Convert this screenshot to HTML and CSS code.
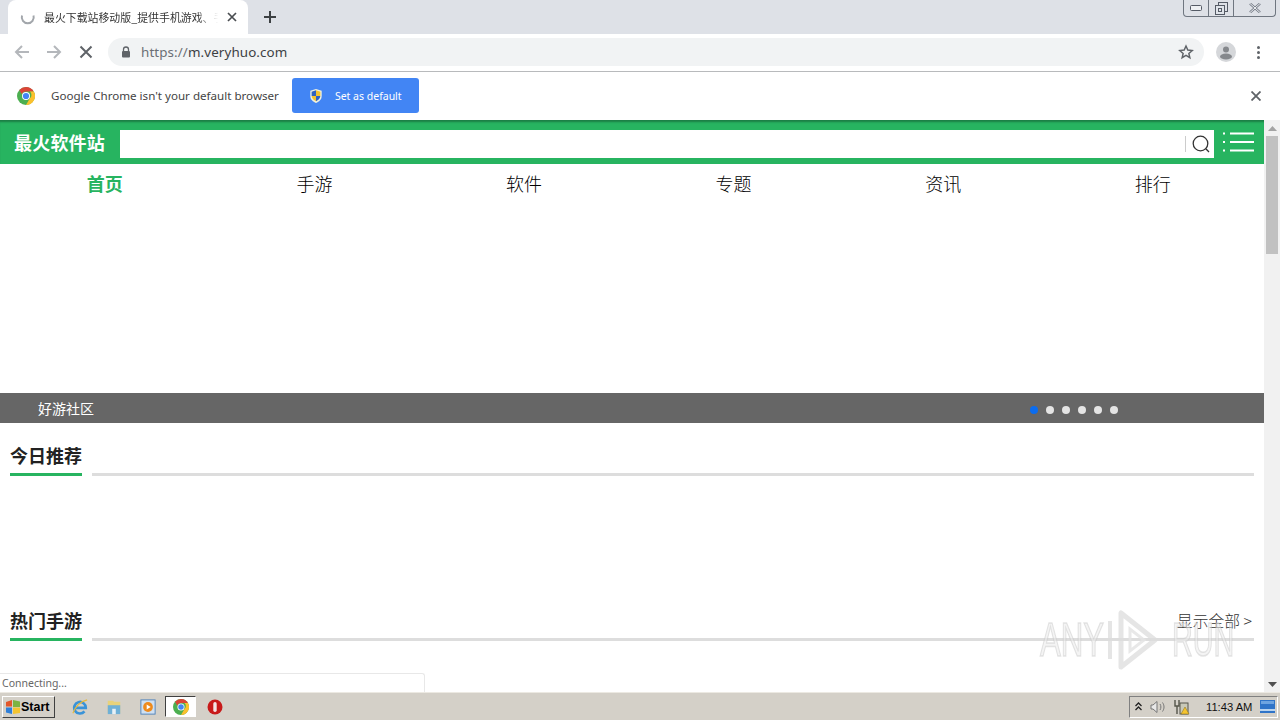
FILE: index.html
```html
<!DOCTYPE html>
<html lang="zh">
<head>
<meta charset="utf-8">
<title>最火软件站</title>
<link rel="stylesheet" href="styles.css">
</head>
<body>
<div class="tabstrip">
  <div class="tab">
    <svg class="spinner" width="16" height="16" viewBox="0 0 16 16"><path d="M2 6.500a6 6 0 1 0 11.500 0" fill="none" stroke="#a2a6ab" stroke-width="2"/></svg>
    <span class="tab-title">最火下载站移动版_提供手机游戏、手</span>
    <svg class="tab-x" width="10" height="10" viewBox="0 0 10 10"><path d="M1 1l8 8M9 1l-8 8" stroke="#4a4d51" stroke-width="1.7"/></svg>
  </div>
  <svg class="newtab" width="12" height="12" viewBox="0 0 12 12"><path d="M6 0v12M0 6h12" stroke="#3c4043" stroke-width="2"/></svg>
  <div class="winbtns">
    <div class="winbtn min"><svg width="12" height="6" viewBox="0 0 12 6"><rect x=".5" y=".5" width="11" height="5" rx="1" fill="#eef0f3" stroke="#555b66"/></svg></div>
    <div class="winbtn max"><svg width="13" height="13" viewBox="0 0 13 13"><rect x="3.500" y=".5" width="9" height="9" fill="none" stroke="#555b66"/><rect x=".5" y="3.500" width="9" height="9" fill="#e0e4ea" stroke="#555b66"/><rect x="3.500" y="6.500" width="3" height="3" fill="none" stroke="#555b66"/></svg></div>
    <div class="winbtn close"><svg width="12" height="10" viewBox="0 0 12 10"><path d="M1 .5l10 9M11 .5l-10 9" stroke="#777d88" stroke-width="2.400"/><path d="M1 .5l10 9M11 .5l-10 9" stroke="#eef0f3" stroke-width="1"/></svg></div>
  </div>
</div>

<div class="toolbar">
  <svg class="nav-icon" width="16" height="16" viewBox="0 0 16 16"><path d="M15 8H2M8 2L2 8l6 6" fill="none" stroke="#b4b7bb" stroke-width="2"/></svg>
  <svg class="nav-icon" width="16" height="16" viewBox="0 0 16 16"><path d="M1 8h13M8 2l6 6-6 6" fill="none" stroke="#b4b7bb" stroke-width="2"/></svg>
  <svg class="nav-icon" width="16" height="16" viewBox="0 0 16 16"><path d="M2.500 2.500l11 11M13.500 2.500l-11 11" stroke="#5f6368" stroke-width="2"/></svg>
  <div class="omnibox">
    <svg class="lock" width="10" height="12" viewBox="0 0 10 12"><path d="M2.500 5V3.500a2.500 2.500 0 0 1 5 0V5" fill="none" stroke="#5f6368" stroke-width="1.300"/><rect x="1" y="5" width="8" height="6.500" rx="1" fill="#5f6368"/></svg>
    <span class="url"><span class="url-dim">https://</span>m.veryhuo.com</span>
    <svg class="star" width="16" height="16" viewBox="0 0 24 24"><path d="M12 3l2.700 6.100 6.600.6-5 4.400 1.500 6.500L12 17.200l-5.800 3.400 1.500-6.500-5-4.400 6.600-.6z" fill="none" stroke="#5f6368" stroke-width="2.200"/></svg>
  </div>
  <div class="avatar">
    <svg width="20" height="20" viewBox="0 0 20 20"><circle cx="10" cy="10" r="10" fill="#d5d7da"/><circle cx="10" cy="7.500" r="3" fill="#85888c"/><ellipse cx="10" cy="14.500" rx="6" ry="3" fill="#85888c"/></svg>
  </div>
  <div class="kebab"><i></i><i></i><i></i></div>
</div>

<div class="infobar">
  <svg class="chrome-logo" width="18" height="18" viewBox="0 0 18 18">
    <circle cx="9" cy="9" r="9" fill="#4caf50"/>
    <path d="M9 0a9 9 0 0 1 7.800 4.500H9A4.500 4.500 0 0 0 4.800 7.300L2.300 3A9 9 0 0 1 9 0z" fill="#db4437"/>
    <path d="M16.800 4.500A9 9 0 0 1 9 18l3.900-6.700a4.500 4.500 0 0 0 0-6.800z" fill="#fbc02d"/>
    <circle cx="9" cy="9" r="4" fill="#fff"/><circle cx="9" cy="9" r="3.100" fill="#4285f4"/>
  </svg>
  <span class="info-text">Google Chrome isn't your default browser</span>
  <div class="default-btn">
    <svg width="14" height="16" viewBox="0 0 16 17"><path d="M8 .5l6.500 2v6c0 4-3 6.500-6.500 8-3.500-1.500-6.500-4-6.500-8v-6z" fill="#eef0e0"/><path d="M8 2l5 1.500V8.500H8z" fill="#f2c230"/><path d="M8 8.500h5c-.3 3-2.500 4.800-5 6z" fill="#2f62c0"/><path d="M8 2v6.500H3V3.500z" fill="#2f62c0"/><path d="M3 8.500h5v6c-2.500-1.200-4.700-3-5-6z" fill="#f2c230"/></svg>
    <span>Set as default</span>
  </div>
  <svg class="info-close" width="10" height="10" viewBox="0 0 10 10"><path d="M.5.500l9 9M9.500.500l-9 9" stroke="#5f6368" stroke-width="1.800"/></svg>
</div>

<div class="viewport">
  <main class="page">
    <header class="site-head">
      <div class="brand">最火软件站</div>
      <div class="search">
        <span class="search-sep"></span>
        <svg width="20" height="20" viewBox="0 0 20 20"><circle cx="9.500" cy="9.500" r="7.300" fill="none" stroke="#333" stroke-width="1.300"/><path d="M14.800 14.800l3.200 3.200" stroke="#333" stroke-width="1.300"/></svg>
      </div>
      <svg class="menu" width="32" height="20" viewBox="0 0 32 20"><path d="M0 1.500h2M0 10h2M0 18.500h2M7 1.500h24M7 10h24M7 18.500h24" stroke="#fff" stroke-width="2"/></svg>
    </header>
    <nav class="main-nav">
      <a class="active">首页</a><a>手游</a><a>软件</a><a>专题</a><a>资讯</a><a>排行</a>
    </nav>
    <div class="banner">
      <div class="caption">
        <span class="caption-text">好游社区</span>
        <div class="dots"><i class="on"></i><i></i><i></i><i></i><i></i><i></i></div>
      </div>
    </div>
    <section class="sec sec-today">
      <div class="sec-head"><h2>今日推荐</h2><span class="rule"></span></div>
    </section>
    <section class="sec sec-hot">
      <div class="sec-head"><h2>热门手游</h2><span class="rule"></span><a class="more">显示全部 &gt;</a></div>
    </section>
  </main>
  <aside class="scrollbar">
    <div class="sb-arrow"><svg width="9" height="5" viewBox="0 0 9 5"><path d="M4.500 0L9 5H0z" fill="#a3a3a3"/></svg></div>
    <div class="sb-track"><div class="sb-thumb"></div></div>
    <div class="sb-arrow"><svg width="9" height="5" viewBox="0 0 9 5"><path d="M0 0h9L4.500 5z" fill="#505050"/></svg></div>
  </aside>
  <div class="status">Connecting...</div>
  <div class="watermark">
    <span class="wm-any">ANY</span>
    <svg class="wm-icon" width="50" height="60" viewBox="0 0 50 60"><path d="M2 11v38" fill="none" stroke="#dcdcdc" stroke-width="4" opacity=".75"/><path d="M13 3v54l34-27z" fill="none" stroke="#dcdcdc" stroke-width="5" stroke-linejoin="round" opacity=".75"/><path d="M22 19v22l14-11z" fill="none" stroke="#e4e4e4" stroke-width="3" opacity=".85"/></svg>
    <span class="wm-run">RUN</span>
  </div>
</div>

<footer class="taskbar">
  <div class="start">
    <svg width="16" height="16" viewBox="0 0 16 16"><path d="M1 3l6-2v6.500H1z" fill="#e2572b"/><path d="M8 1l7 1.500v5.500H8z" fill="#7cb342"/><path d="M1 8.500h6V15l-6-1.500z" fill="#2f7fd8"/><path d="M8 8.500h7V14l-7 1z" fill="#f4c430"/></svg>
    <span>Start</span>
  </div>
  <div class="quick">
    <svg class="ql" width="16" height="16" viewBox="0 0 18 18"><path d="M3.500 10H15.500A6.500 6.500 0 1 0 14 14" fill="none" stroke="#3a93d8" stroke-width="3"/><path d="M1 16C4 8 9 3 17 1" fill="none" stroke="#e8b93a" stroke-width="1.300"/></svg>
    <svg class="ql" width="16" height="16" viewBox="0 0 18 18"><path d="M2 2h6l1 1h7v13H2z" fill="#e8d27a"/><rect x="2" y="7" width="14" height="10" fill="#6fb0d6"/><rect x="7" y="11" width="4" height="6" fill="#e8f0f5"/></svg>
    <svg class="ql" width="16" height="16" viewBox="0 0 18 18"><rect x="1" y="1" width="16" height="16" fill="#cfe0f2" stroke="#4a7fb8"/><circle cx="9" cy="9" r="5.500" fill="#ee8a1c"/><path d="M7.500 6.200L12 9l-4.500 2.800z" fill="#fff"/></svg>
    <div class="ql-active">
      <svg width="16" height="16" viewBox="0 0 18 18"><circle cx="9" cy="9" r="9" fill="#4caf50"/><path d="M9 0a9 9 0 0 1 7.800 4.500H9A4.500 4.500 0 0 0 4.800 7.300L2.300 3A9 9 0 0 1 9 0z" fill="#db4437"/><path d="M16.800 4.500A9 9 0 0 1 9 18l3.900-6.700a4.500 4.500 0 0 0 0-6.800z" fill="#fbc02d"/><circle cx="9" cy="9" r="4" fill="#fff"/><circle cx="9" cy="9" r="3.100" fill="#4285f4"/></svg>
    </div>
    <svg class="ql" width="16" height="16" viewBox="0 0 16 16"><circle cx="8" cy="8" r="7.500" fill="#c81a1a"/><rect x="6.300" y="3" width="3.400" height="10" rx="1.700" fill="#f4e4e4"/></svg>
  </div>
  <div class="tray">
    <svg width="7" height="9" viewBox="0 0 7 9"><path d="M.5 4l3-3 3 3M.5 8l3-3 3 3" fill="none" stroke="#222" stroke-width="1.300"/></svg>
    <svg width="16" height="14" viewBox="0 0 16 14"><path d="M1 5h2l4-3.500v11L3 9H1z" fill="#e8e8e8" stroke="#777"/><path d="M10 4c1.200 2 1.200 4 0 6M12.500 2.500c2 3 2 6 0 9" fill="none" stroke="#777"/></svg>
    <svg width="16" height="16" viewBox="0 0 16 16"><rect x="6" y="4" width="8" height="11" fill="#c9c9b8" stroke="#55554a"/><path d="M1 1v6h4V1M3 7v8" fill="none" stroke="#55554a" stroke-width="1.400"/><path d="M11 8l4 7H7z" fill="#f4c430" stroke="#8a6d10" stroke-width=".5"/></svg>
    <span class="clock">11:43 AM</span>
    <svg width="15" height="13" viewBox="0 0 15 13"><rect width="15" height="13" fill="#2f74c8"/><rect y="9" width="15" height="2" fill="#b9d4ef"/><rect x="1" y="1" width="13" height="3" fill="#6ea4e0"/></svg>
  </div>
</footer>
</body>
</html>
```
FILE: styles.css
```css
* { box-sizing: border-box; }
html, body { margin: 0; height: 720px; overflow: hidden; }
body {
  width: 1280px;
  display: flex;
  flex-direction: column;
  font-family: "Noto Sans", "Noto Sans CJK SC", sans-serif;
  background: #fff;
}

/* tab strip */
.tabstrip {
  height: 34px;
  flex: none;
  display: flex;
  align-items: flex-start;
  background: #dee1e7;
}
.tab {
  width: 240px;
  height: 34px;
  margin-left: 8px;
  padding: 0 0 0 12px;
  display: flex;
  align-items: center;
  background: #fff;
  border-radius: 8px 8px 0 0;
}
.spinner { flex: none; }
.tab-title {
  flex: none;
  width: 178px;
  margin-left: 8px;
  font-size: 10.900px;
  line-height: 16px;
  color: #333;
  white-space: nowrap;
  font-family: "Noto Sans CJK SC", sans-serif;
  -webkit-mask-image: linear-gradient(to right, #000 86%, transparent 98%);
  mask-image: linear-gradient(to right, #000 86%, transparent 98%);
}
.tab-x { margin-left: 5px; flex: none; }
.newtab { margin: 11px 0 0 16px; flex: none; }
.winbtns {
  margin-left: auto;
  margin-right: 4px;
  height: 17px;
  display: flex;
  border: 1px solid #6f7680;
  border-top: 0;
  border-radius: 0 0 4px 4px;
}
.winbtn {
  display: flex;
  align-items: center;
  justify-content: center;
  border-right: 1px solid #6f7680;
}
.min { width: 25px; }
.max { width: 25px; }
.close { width: 41px; border-right: 0; }

/* toolbar */
.toolbar {
  height: 38px;
  flex: none;
  display: flex;
  align-items: center;
  padding-bottom: 1px;
  background: #fff;
  border-bottom: 1px solid #b8babc;
}
.nav-icon { flex: none; margin-left: 14px; margin-right: 2px; }
.omnibox {
  width: 1096px;
  height: 28px;
  margin-left: 12px;
  display: flex;
  align-items: center;
  padding: 0 10px 0 13px;
  background: #f1f3f4;
  border-radius: 14px;
}
.lock { flex: none; }
.url {
  margin-left: 10px;
  font-size: 13.400px;
  letter-spacing: .1px;
  color: #3c4043;
}
.url-dim { color: #6b6f74; }
.star { margin-left: auto; }
.avatar { margin-left: 12px; height: 20px; }
.kebab {
  margin-left: 21px;
  display: flex;
  flex-direction: column;
  gap: 2px;
}
.kebab i {
  width: 3px;
  height: 3px;
  border-radius: 50%;
  background: #5f6368;
}

/* infobar */
.infobar {
  height: 48px;
  flex: none;
  display: flex;
  align-items: center;
  padding: 0 0 1px 17px;
  background: #fff;
}
.chrome-logo { flex: none; margin-top: 1px; }
.info-text {
  margin-left: 16px;
  font-size: 11.600px;
  color: #444;
  white-space: nowrap;
}
.default-btn {
  width: 127px;
  height: 35px;
  margin-left: 13px;
  padding-left: 17px;
  display: flex;
  align-items: center;
  gap: 12px;
  border-radius: 3px;
  background: #4285f4;
  color: #fff;
  font-size: 10.500px;
}
.info-close { margin-left: auto; margin-right: 19px; margin-top: 1px; }

/* page viewport */
.viewport {
  position: relative;
  flex: 1;
  min-height: 0;
  display: flex;
  overflow: hidden;
}
.page {
  flex: 1;
  min-width: 0;
  font-family: "Noto Sans CJK SC", sans-serif;
}
.site-head {
  height: 44px;
  display: flex;
  align-items: flex-start;
  padding-top: 10px;
  background: #27b460;
  box-shadow: inset 0 3px 2px -1px #1c7f45;
}
.brand {
  width: 120px;
  padding-left: 14px;
  font-size: 18px;
  line-height: 24px;
  letter-spacing: .2px;
  font-weight: 700;
  color: #fff;
  white-space: nowrap;
}
.search {
  width: 1094px;
  height: 28px;
  display: flex;
  align-items: center;
  justify-content: flex-end;
  padding-right: 3px;
  gap: 5px;
  background: #fff;
}
.search-sep {
  width: 1px;
  height: 16px;
  background: #ccc;
}
.menu { margin: 2px 0 0 9px; }
.main-nav {
  height: 41px;
  display: grid;
  grid-template-columns: repeat(6, 209.600px);
  justify-content: start;
}
.main-nav a {
  text-align: center;
  font-size: 18px;
  line-height: 39px;
  font-weight: 300;
  color: #000;
}
.main-nav a.active {
  color: #27b460;
  font-weight: 700;
}
.banner {
  height: 218px;
  display: flex;
  align-items: flex-end;
}
.caption {
  width: 100%;
  height: 30px;
  display: flex;
  align-items: center;
  padding-left: 38px;
  background: #666;
  color: #fff;
}
.caption-text { font-size: 14px; }
.dots {
  margin: 4px 146px 0 auto;
  display: flex;
  gap: 8px;
}
.dots i {
  width: 8px;
  height: 8px;
  border-radius: 50%;
  background: #e4e4e4;
}
.dots i.on { background: #0a6cf0; }
.sec { padding: 0 10px; }
.sec-today { height: 185px; padding-top: 21px; }
.sec-hot { height: 60px; padding-top: 1px; }
.sec-head {
  position: relative;
  height: 32px;
  display: flex;
  align-items: flex-end;
  gap: 10px;
}
.sec-head h2 {
  margin: 0;
  height: 32px;
  border-bottom: 3px solid #27b460;
  font-size: 18px;
  line-height: 22px;
  font-weight: 700;
  color: #222;
  white-space: nowrap;
}
.rule {
  flex: 1;
  height: 3px;
  background: #ddd;
}
.more {
  position: absolute;
  right: 2px;
  top: 2px;
  font-size: 15.800px;
  line-height: 20px;
  font-weight: 300;
  color: #333;
  white-space: nowrap;
}

/* scrollbar */
.scrollbar {
  width: 16px;
  flex: none;
  display: flex;
  flex-direction: column;
  background: #f1f1f1;
}
.sb-arrow {
  height: 16px;
  flex: none;
  display: flex;
  align-items: center;
  justify-content: center;
}
.sb-track { flex: 1; }
.sb-thumb {
  height: 118px;
  margin: 0 2px;
  background: #c1c1c1;
}

/* overlays */
.status {
  position: absolute;
  left: 0;
  bottom: 0;
  width: 425px;
  height: 19px;
  padding-left: 2px;
  font-family: "Noto Sans", sans-serif;
  font-size: 10.500px;
  line-height: 19px;
  color: #666;
  background: #fff;
  border: 1px solid #e8e8e8;
  border-left: 0;
  border-bottom: 0;
  border-radius: 0 3px 0 0;
}
.watermark {
  position: absolute;
  left: 1040px;
  top: 490px;
  width: 194px;
  height: 60px;
  display: flex;
  align-items: center;
  font-family: "Liberation Sans", sans-serif;
  font-size: 48px;
  line-height: 60px;
  color: rgba(235, 235, 235, .55);
  -webkit-text-stroke: 1.500px rgba(190, 190, 190, .4);
}
.wm-any, .wm-run {
  display: block;
  flex: none;
  width: 62px;
  transform-origin: left center;
  white-space: nowrap;
}
.wm-any { transform: scaleX(.65); }
.wm-run { transform: scaleX(.6); }
.wm-icon { flex: none; margin: 0 14px 0 6px; }

/* taskbar */
.taskbar {
  height: 28px;
  flex: none;
  display: flex;
  align-items: center;
  background: #d4d0c8;
  border-top: 1px solid #ece9e2;
}
.start {
  width: 53px;
  height: 22px;
  margin-left: 2px;
  display: flex;
  align-items: center;
  padding-left: 2px;
  background: #d4d0c8;
  border: 1px solid;
  border-color: #fff #404040 #404040 #fff;
  font-family: "Liberation Sans", sans-serif;
  font-size: 12.500px;
  font-weight: 700;
  color: #000;
}
.quick {
  display: flex;
  align-items: center;
  margin-left: 8px;
}
.ql { margin: 0 9px; flex: none; }
.ql-active {
  width: 31px;
  height: 21px;
  margin-right: 2px;
  display: flex;
  align-items: center;
  justify-content: center;
  background: #fff;
  border: 1px solid;
  border-color: #404040 #fff #fff #404040;
}
.tray {
  margin-left: auto;
  margin-right: 2px;
  width: 149px;
  height: 22px;
  display: flex;
  align-items: center;
  gap: 8px;
  padding-left: 5px;
  border: 1px solid;
  border-color: #808080 #fff #fff #808080;
  font-family: "Liberation Sans", sans-serif;
}
.clock {
  margin-left: 8px;
  font-size: 11.200px;
  color: #111;
  white-space: nowrap;
}
```
